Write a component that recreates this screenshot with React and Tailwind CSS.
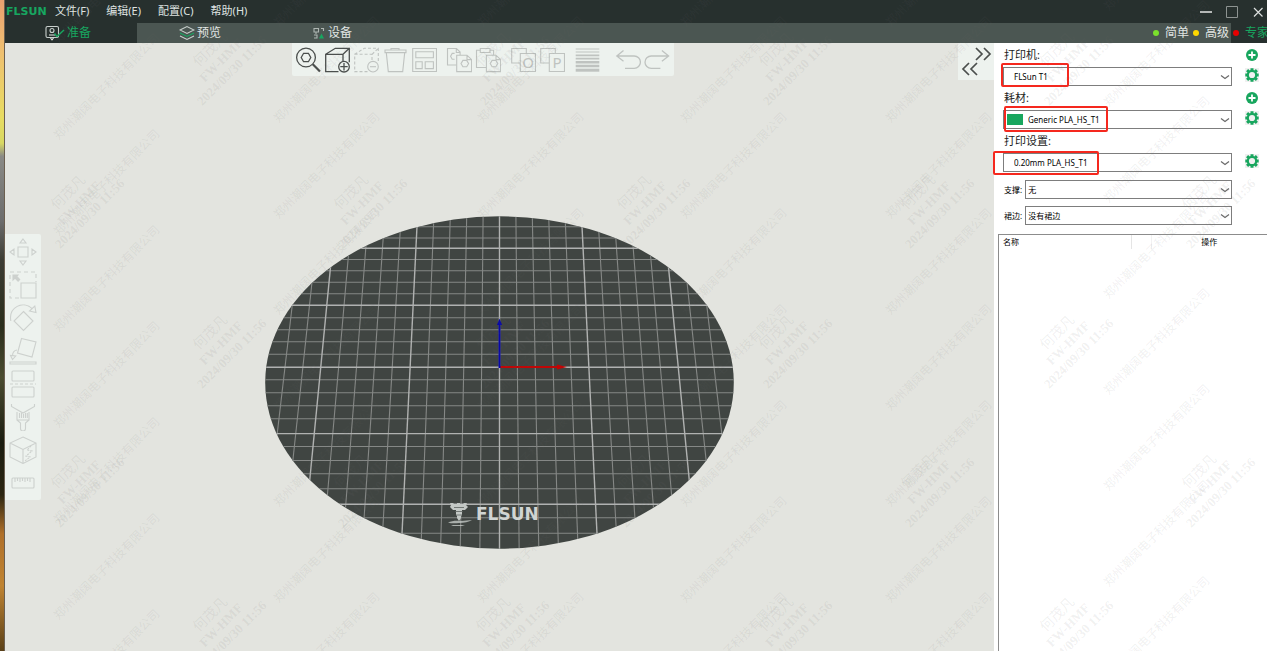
import React from "react";

const UI = "font-['Noto_Sans','Noto_Sans_CJK_SC',sans-serif]";

/* ---------- Watermark ---------- */
const range = (start, step, end) => {
  const out = [];
  for (let v = start; v < end; v += step) out.push(v);
  return out;
};

const companyMarks = [107, 327, 531, 734, 939, 1157].flatMap((x, i) => {
  const start = i === 0 ? -9 : i === 5 ? -42 : -26;
  return range(start, 96, 720).map((y) => ({ x, y }));
});

const HIGH = [60, 343, 625];
const LOW = [203, 482];
const userMarks = [
  [79, LOW],
  [221, HIGH],
  [362, LOW],
  [504, HIGH],
  [645, LOW],
  [787, HIGH],
  [929, LOW],
  [1068, HIGH],
  [1210, LOW],
].flatMap(([x, ys]) => ys.map((y) => ({ x, y })));

function Watermark() {
  return (
    <div
      aria-hidden="true"
      className="pointer-events-none absolute inset-0 z-20 overflow-hidden font-['Liberation_Serif','Noto_Sans_CJK_SC',serif] leading-[15px]"
    >
      {companyMarks.map((m) => (
        <span
          key={`c${m.x}-${m.y}`}
          className="absolute -translate-x-1/2 -translate-y-1/2 -rotate-45 text-[12px] whitespace-nowrap text-[#6e6e6e]/10"
          style={{ left: m.x, top: m.y }}
        >
          郑州潮阔电子科技有限公司
        </span>
      ))}
      {userMarks.map((m) => (
        <span
          key={`u${m.x}-${m.y}`}
          className="absolute -translate-x-1/2 -translate-y-1/2 -rotate-45 text-center text-[13px] font-bold whitespace-nowrap text-[#6e6e6e]/10"
          style={{ left: m.x, top: m.y }}
        >
          <span className="block text-[14px] font-normal">何茂凡</span>
          <span className="block">FW-HMF</span>
          <span className="block">2024/09/30 11:56</span>
        </span>
      ))}
    </div>
  );
}

/* ---------- Icons ---------- */
function Icon({ children, size = "size-[26px]", box = "0 0 26 26" }) {
  return (
    <svg viewBox={box} className={`${size} block`} fill="none" stroke="currentColor" strokeWidth="1.1" aria-hidden="true">
      {children}
    </svg>
  );
}

const SearchIcon = () => (
  <Icon>
    <circle cx="11" cy="10.5" r="9.4" strokeWidth="1.3" />
    <path d="M6.2 10.5 8.6 6.3h4.8l2.4 4.2-2.4 4.2H8.6z" strokeWidth="1.3" />
    <path d="M17.8 17.3 25 24.6" strokeWidth="2.2" />
  </Icon>
);
const CubeAddIcon = () => (
  <Icon>
    <path d="M14.5 24.6H1.7V7.3H19v7M1.7 7.3l9.6-6h14v14M19 7.3l6.3-6" strokeWidth="1.3" />
    <circle cx="20" cy="19.7" r="5.3" strokeWidth="1.3" />
    <path d="M20 16v7.4M16.3 19.7h7.4" strokeWidth="1.3" />
  </Icon>
);
const CubeRemoveIcon = () => (
  <Icon>
    <path d="M14.5 24.6H1.7V7.3H19v7M1.7 7.3l9.6-6h14v14M19 7.3l6.3-6" strokeDasharray="3 2" />
    <circle cx="20" cy="19.7" r="5.3" />
    <path d="M17 19.7h6" />
  </Icon>
);
const TrashIcon = () => (
  <Icon>
    <path d="M3 3h21v2.6H3zM9 3V1.5h8V3M4.3 5.6l2 19h14.4l2-19" />
  </Icon>
);
const ArrangeIcon = () => (
  <Icon>
    <path d="M1.7 1.5h23.8v23H1.7zM4.8 4.8h17.6v6H4.8zM4.8 14.8h6.4v6.8H4.8zM14.2 14.8h8.2v6.8h-8.2z" />
  </Icon>
);
const CopyIcon = () => (
  <Icon>
    <path d="M10.5 18h-9V1.5h9l3.6 3.6V8M10.3 1.5v4h3.8M8.6 6.4H6.2L4.6 9.3l1.6 3h2.4" />
    <path d="M10.7 8.2H21l4.6 4.4v12H10.7zM21 8.2v4.4h4.6M15 16.6l1.9-3.2h3.8l1.9 3.2-1.9 3.2h-3.8z" />
  </Icon>
);
const PasteIcon = () => (
  <Icon>
    <path d="M11.4 20.5H1.5V3.2h3.8M15 3.2h3.6v5M5.3 1.5H15v4H5.3z" />
    <path d="M11.4 8.2H21l4.6 4.4v12H11.4zM21 8.2v4.4h4.6M15.2 16.6l1.9-3.2h3.8l1.9 3.2-1.9 3.2h-3.8z" />
  </Icon>
);
function StackIcon({ letter }) {
  return (
    <Icon>
      <path d="M10.3 16H1.7V1.5h14.6v5M10.3 6.5h15.2v18H10.3z" />
      <text
        x="18"
        y="21"
        textAnchor="middle"
        fill="currentColor"
        stroke="none"
        className="font-['Noto_Sans',sans-serif] text-[15px]"
      >
        {letter}
      </text>
    </Icon>
  );
}
const LayersIcon = () => (
  <Icon>
    <path d="M1.7 2h23.6M1.7 5h23.6" strokeWidth="1.2" />
    <path d="M1.7 8.3h23.6M1.7 11.7h23.6" strokeWidth="1.8" />
    <path d="M1.7 15.2h23.6M1.7 19h23.6" strokeWidth="2.4" />
    <path d="M1.7 23.2h23.6" strokeWidth="3" />
  </Icon>
);
const UndoIcon = () => (
  <Icon>
    <path d="M8.5 3.5 1.8 9l6.7 5.2M1.8 9h17.4a6.2 6.2 0 0 1 0 12.4H10" strokeWidth="1.3" />
  </Icon>
);
const RedoIcon = () => (
  <Icon>
    <path d="M17.9 3.5 24.6 9l-6.7 5.2M24.6 9H7.2a6.2 6.2 0 0 0 0 12.4h9.2" strokeWidth="1.3" />
  </Icon>
);

const MoveIcon = () => (
  <Icon size="size-7" box="0 0 28 28">
    <path d="M9 9h10v10H9zM14 1l3 4h-6zM14 27l3-4h-6zM1 14l4-3v6zM27 14l-4-3v6z" />
  </Icon>
);
const ScaleIcon = () => (
  <Icon size="size-7" box="0 0 28 28">
    <path d="M10 27H1V1h26v10" strokeDasharray="4 3" />
    <path d="M12 12h15v15H12z" />
    <path d="M4 4h5L7.7 5.5l3 3-1.6 1.6-3-3L4 9z" fill="currentColor" />
  </Icon>
);
const RotateIcon = () => (
  <Icon size="size-7" box="0 0 28 28">
    <path d="M14.5 7.5 24 17l-9.5 9.5L5 17zM1.8 17C-.5 3 14-4 23.5 5M20.5 7l6.5 1.5L25.8 2z" />
  </Icon>
);
const PlaceIcon = () => (
  <Icon size="size-7" box="0 0 28 28">
    <path d="M12.5 1.5 27 5l-4 15-14.5-4zM8 13c-3 .5-4.5 3-4.5 6M1.5 18.5l2 4 3.2-3.5zM1 25h26v2H1z" />
  </Icon>
);
const CutIcon = () => (
  <Icon size="size-7" box="0 0 28 28">
    <rect x="3" y="1" width="22" height="10" rx="1" />
    <rect x="3" y="17" width="22" height="10" rx="1" />
    <path d="M1 14h26" strokeDasharray="3 2" />
  </Icon>
);
const BrushIcon = () => (
  <Icon size="size-7" box="0 0 28 28">
    <path d="M2.5 1v2.5L14 10l11.5-6.5V1M8 9v8h12V9M8 17l3.5 3v5.5a2.5 2.5 0 0 0 5 0V20l3.5-3M10.5 10v5M12.5 10v5M14.5 11v4M16.5 10v5M18.3 10v5" />
  </Icon>
);
const SeamIcon = () => (
  <Icon size="size-7" box="0 0 28 28">
    <path d="M14 1 27 7v14l-13 6.500L1 21V7zM1 7l13 6.500L27 7M14 13.500v14" />
    <path d="M22 10l-4 4 5 1-6 5 4 1-5 4" strokeDasharray="2 1" />
  </Icon>
);
const RulerIcon = () => (
  <Icon size="size-7" box="0 0 28 28">
    <rect x="3" y="9" width="22" height="10" rx="1" />
    <path d="M6 9v4M8.500 9v3M11 9v4M13.500 9v3M16 9v4M18.500 9v3M21 9v4" />
  </Icon>
);

const PrepareIcon = () => (
  <Icon size="h-4 w-5" box="0 0 20 16">
    <rect x="1" y="1.5" width="12.5" height="11" rx="1.5" stroke="#c9d0cd" />
    <circle cx="7" cy="5.5" r="2" stroke="#c9d0cd" />
    <path d="M4 10h6.5M5.5 13l1.5 1.8L8.5 13" stroke="#e6eae8" />
    <path d="M9.5 8.5 12 11.5 19 5" stroke="#17a660" strokeWidth="1.5" />
  </Icon>
);
const PreviewIcon = () => (
  <Icon size="size-4" box="0 0 16 16">
    <path d="M1 5l7-3.5L15 5 8 8.500zM1 11l7 3.500L15 11" stroke="#c9d0cd" />
    <path d="M1 8l7 3.500L15 8" stroke="#17a660" />
  </Icon>
);
const DeviceIcon = () => (
  <Icon size="size-3.5" box="0 0 14 14">
    <path d="M2 2.5h4.500V6H2zM9 2.500h2.500V5M4 6v2M2 9h3v3H2" stroke="#aeb6b2" />
    <path d="M9.500 7.500l2.500 5H7z" fill="#17a660" stroke="none" />
  </Icon>
);

function PlusBadge() {
  return (
    <svg viewBox="0 0 14 14" className="block size-3.5" aria-hidden="true">
      <circle cx="7" cy="7" r="6" fill="#18a65e" />
      <path d="M7 3.5v7M3.5 7h7" stroke="#fff" strokeWidth="1.8" />
    </svg>
  );
}
function GearBadge() {
  return (
    <svg viewBox="0 0 14 14" className="block size-3.5 bg-[#f0f0f0]" fill="none" stroke="#18a65e" aria-hidden="true">
      <circle cx="7" cy="7" r="4.2" strokeWidth="2.2" />
      <path
        d="M7 .3v2.300M7 11.400v2.300M.3 7h2.300M11.400 7h2.300M2.100 2.100l1.700 1.700M10.200 10.200l1.700 1.700M2.100 11.900l1.700-1.700M10.200 3.800l1.700-1.700"
        strokeWidth="3"
      />
    </svg>
  );
}

/* ---------- Build plate ---------- */
const CX = 234.5;
const ROWS = [
  [10.8, 0], [22, 0], [32.2, 1], [43.5, 0], [54.8, 0], [66.2, 0], [77.8, 0], [89.2, 1], [101.8, 0], [113.8, 0], [125.8, 0],
  [138.2, 0], [151.3, 1], [163.8, 0], [176.8, 0], [189.8, 0], [202.8, 0], [217.6, 1], [230.5, 0], [244.5, 0], [257.8, 0],
  [272.8, 0], [288.2, 1], [301.8, 0], [317.2, 0],
];
const COLS = range(-12, 1, 13);

function BuildPlate() {
  return (
    <svg viewBox="0 0 469 333" className="block h-[333px] w-[469px]" role="img" aria-label="FLSUN">
      <defs>
        <clipPath id="plate">
          <ellipse cx={CX} cy="166.5" rx="234.3" ry="166.2" />
        </clipPath>
      </defs>
      <ellipse cx={CX} cy="166.5" rx="234.3" ry="166.2" fill="#404542" />
      <g clipPath="url(#plate)">
        {[0, 1].map((major) => (
          <g key={major} stroke={major ? "#b0b2b1" : "#858886"} strokeWidth={major ? 1.4 : 1.1}>
            {ROWS.filter((r) => r[1] === major).map((r) => (
              <path key={r[0]} d={`M0 ${r[0]}H469`} />
            ))}
            {COLS.filter((k) => (k % 5 === 0) === (major === 1)).map((k) => (
              <path key={k} d={`M${CX + k * 16.4} 0L${CX + k * 19.65} 333`} />
            ))}
          </g>
        ))}
      </g>
      <path d="M234.5 151h58" stroke="#c00606" strokeWidth="2" />
      <path d="M292 148.500 302 151l-10 2.500z" fill="#c00606" />
      <path d="M234.5 152v-43" stroke="#0808a8" strokeWidth="2" />
      <path d="M232 109 234.500 102.500 237 109z" fill="#0808a8" />
      <g fill="#c3c8c5" stroke="none">
        <path d="M186 289l-1-2h3l1 1h3v-1h3v1h3l1-1h3l-1 2 2 2-3 3h-3v5l-1 1v2l-2 3-2-3v-2l-1-1v-5h-3l-3-3z" />
        <path d="M183 306.500c4-2 9-2 13-1.500l11-1c-3 2-8 3-13 3-4 .5-8 .5-11-.5zM186 309h14l-3 1h-9z" opacity=".8" />
      </g>
      <path d="M189 291.500h10M190 295.500h8M191 299h6" stroke="#5c625f" strokeWidth=".8" />
      <text x="211" y="304" fill="#d0d4d2" className="font-['DejaVu_Sans',sans-serif] text-[17px] font-bold">
        FLSUN
      </text>
    </svg>
  );
}

/* ---------- Pieces ---------- */
const TOOL_GROUPS = [
  [
    ["搜索", SearchIcon, true],
    ["添加", CubeAddIcon, true],
    ["删除", CubeRemoveIcon],
    ["全部删除", TrashIcon],
    ["排列", ArrangeIcon],
  ],
  [
    ["复制", CopyIcon],
    ["粘贴", PasteIcon],
  ],
  [
    ["拆分为对象", () => <StackIcon letter="O" />],
    ["拆分为零件", () => <StackIcon letter="P" />],
  ],
  [["可变层高", LayersIcon]],
];

function Tool({ label, icon: I, active }) {
  return (
    <button type="button" aria-label={label} className={active ? "text-[#4b4f4d]" : "text-[#bfc3c0]"}>
      <I />
    </button>
  );
}

function Chevron() {
  return (
    <svg viewBox="0 0 10 6" className="pointer-events-none absolute top-[7px] right-0.5 h-1.5 w-2.5" fill="none" stroke="#6a6a6a" aria-hidden="true">
      <path d="M1 1.5 5 4.5l4-3" strokeWidth="1.2" />
    </svg>
  );
}

function Select({ id, value, pad, swatch, mark }) {
  return (
    <div className="relative min-w-0 flex-1">
      <select
        id={id}
        className={`${pad} block h-[19px] w-full appearance-none border border-[#7d7d7d] bg-white text-[8px] leading-4 text-black outline-none`}
      >
        <option>{value}</option>
      </select>
      {swatch && <span className="absolute top-1 left-1 h-[11px] w-4 bg-[#18a65e]" />}
      <Chevron />
      {mark && <span className={`${mark} pointer-events-none absolute rounded-[2px] border-2 border-[#f5281e]`} />}
    </div>
  );
}

function Preset({ id, label, value, pad, swatch, mark, add }) {
  return (
    <div className="flex flex-col gap-1">
      <div className="flex h-4 items-center justify-between pl-px">
        <label htmlFor={id} className="text-[11px] leading-4 text-[#1c1c1c]">
          {label}
        </label>
        {add && (
          <button type="button" aria-label="添加">
            <PlusBadge />
          </button>
        )}
      </div>
      <div className="flex items-start gap-[13px]">
        <Select id={id} value={value} pad={pad} swatch={swatch} mark={mark} />
        <button type="button" aria-label="设置" className="pt-px">
          <GearBadge />
        </button>
      </div>
    </div>
  );
}

function Option({ id, label, value }) {
  return (
    <div className="flex items-center gap-[3px] pr-[27px] pl-px">
      <label htmlFor={id} className="text-[8px] leading-4 whitespace-nowrap">
        {label}
      </label>
      <Select id={id} value={value} pad="pl-0.5" />
    </div>
  );
}

function Mode({ dot, label, active }) {
  return (
    <button
      type="button"
      className={`flex h-full items-center gap-1.5 pl-0.5 ${active ? "bg-[#27302e] text-[#17a660]" : "text-[#e2e6e4]"}`}
    >
      <span className={`${dot} size-1.5 rounded-full`} />
      <span className="w-[26px] text-left whitespace-nowrap">{label}</span>
    </button>
  );
}

const TABS = [
  ["准备", PrepareIcon, true],
  ["预览", PreviewIcon],
  ["设备", DeviceIcon],
];

export default function App() {
  return (
    <div className={`${UI} relative flex h-screen overflow-hidden bg-[#e3e4df] text-[11px]`}>
      <div className="w-[5px] shrink-0 border-r border-[#6b5f50] bg-[linear-gradient(to_bottom,#e9a070_0%,#efc070_8%,#e8dc62_18%,#d8d862_22%,#8a8a86_24%,#6c6c6c_34%,#3c3d34_40%,#2a2e1c_50%,#4a4c30_58%,#1a1c10_68%,#2c2612_76%,#b0702a_82%,#c08432_90%,#5a4018_100%)]" />

      <div className="flex min-w-0 flex-1 flex-col">
        <header className="flex h-[23px] shrink-0 items-center justify-between bg-[#27302e] text-[#dfe3e1]">
          <div className="flex items-baseline">
            <span className="w-[50px] pl-px font-['DejaVu_Sans',sans-serif] text-[11px] leading-4 font-bold text-[#17a660]">FLSUN</span>
            <nav className="flex gap-[17px]">
              {["文件(F)", "编辑(E)", "配置(C)", "帮助(H)"].map((m) => (
                <button key={m} type="button" className="leading-4">
                  {m}
                </button>
              ))}
            </nav>
          </div>
          <div className="flex items-center gap-3.5 pr-[3px]">
            <button type="button" aria-label="最小化">
              <svg viewBox="0 0 12 12" className="block size-3" stroke="#e6e6e6" strokeWidth="1.5"><path d="M0 6h12" /></svg>
            </button>
            <button type="button" aria-label="最大化">
              <svg viewBox="0 0 12 12" className="block size-3" fill="none" stroke="#8d9391"><path d="M.5.5h11v11H.5z" /></svg>
            </button>
            <button type="button" aria-label="关闭">
              <svg viewBox="0 0 12 12" className="block size-3" stroke="#dcdfde" strokeWidth="1.2"><path d="M2 2l8.5 8.5M10.5 2 2 10.5" /></svg>
            </button>
          </div>
        </header>

        <div className="flex h-5 shrink-0 justify-between bg-[#4b5652] text-[12px]">
          <div className="flex">
            {TABS.map(([label, I, active]) => (
              <button
                key={label}
                type="button"
                className={`flex w-[132px] items-center justify-center gap-0.5 pr-1.5 ${active ? "bg-[#27302e] text-[#17a660]" : "text-[#e2e6e4]"}`}
              >
                <I />
                <span>{label}</span>
              </button>
            ))}
          </div>
          <div className="-mr-1 flex">
            <Mode dot="bg-[#7be02c]" label="简单" />
            <Mode dot="bg-[#ffd800]" label="高级" />
            <Mode dot="bg-[#e60000]" label="专家" active />
          </div>
        </div>

        <div className="flex min-h-0 flex-1">
          <main className="relative flex min-w-0 flex-1 justify-center overflow-hidden bg-[#e3e4df] pt-[173px]">
            <div>
              <BuildPlate />
            </div>

            <div role="toolbar" className="absolute top-0 left-[287px] flex h-[33px] items-center gap-[9px] rounded-b-[2px] bg-[#edf2ee] pr-1 pl-[3px]">
              {TOOL_GROUPS.map((group, i) => (
                <div key={i} className="flex gap-[3px]">
                  {group.map(([label, icon, active]) => (
                    <Tool key={label} label={label} icon={icon} active={active} />
                  ))}
                </div>
              ))}
              <div className="ml-1.5 flex gap-[3px]">
                <Tool label="撤销" icon={UndoIcon} />
                <Tool label="重做" icon={RedoIcon} />
              </div>
            </div>

            <div role="toolbar" className="absolute top-[191px] left-0 flex w-9 flex-col items-center rounded-r-[2px] bg-[#edf2ee] py-px text-[#cdd1ce]">
              {[
                ["移动", MoveIcon],
                ["缩放", ScaleIcon],
                ["旋转", RotateIcon],
                ["放置在面上", PlaceIcon],
                ["剪切", CutIcon],
                ["绘制支撑", BrushIcon],
                ["绘制接缝", SeamIcon],
                ["测量", RulerIcon],
              ].map(([label, I]) => (
                <button key={label} type="button" aria-label={label} className="flex h-[33px] items-center">
                  <I />
                </button>
              ))}
            </div>

            <button type="button" aria-label="折叠侧栏" className="absolute top-0 right-0 bg-[#edf2ee]">
              <svg viewBox="0 0 36 37" className="block h-[37px] w-9" fill="none" stroke="#4b4f4d" strokeWidth="1.7" aria-hidden="true">
                <path d="M18 5l6 6-6 6M26 5l6 6-6 6M11 20l-6 6 6 6M19 20l-6 6 6 6" />
              </svg>
            </button>
          </main>

          <aside className="flex w-[273px] shrink-0 flex-col bg-white text-black">
            <div className="flex flex-col gap-1 pt-1 pr-2 pb-[9px] pl-[9px]">
              <Preset id="printer" label="打印机:" value="FLSun T1" pad="pl-2.5" add mark="-top-1 -left-0.5 h-6 w-[68px]" />
              <Preset id="filament" label="耗材:" value="Generic PLA_HS_T1" pad="pl-6" swatch add mark="-top-1 left-px h-[26px] w-[104px]" />
              <Preset id="print" label="打印设置:" value="0.20mm PLA_HS_T1" pad="pl-2.5" mark="-top-0.5 -left-2.5 h-6 w-[106px]" />
              <div className="flex flex-col gap-[7px] pt-1">
                <Option id="support" label="支撑:" value="无" />
                <Option id="brim" label="裙边:" value="没有裙边" />
              </div>
            </div>
            <div className="ml-1 min-h-0 flex-1 border-t border-l border-[#8c8c8c]">
              <table className="w-full table-fixed text-[8px] leading-[14px]">
                <thead>
                  <tr>
                    <th className="w-[132px] border-r border-[#e5e5e5] pl-1 text-left font-normal">名称</th>
                    <th className="w-5 border-r border-[#f2f2f2]" />
                    <th className="text-center font-normal">操作</th>
                  </tr>
                </thead>
              </table>
            </div>
          </aside>
        </div>
      </div>

      <Watermark />
    </div>
  );
}
